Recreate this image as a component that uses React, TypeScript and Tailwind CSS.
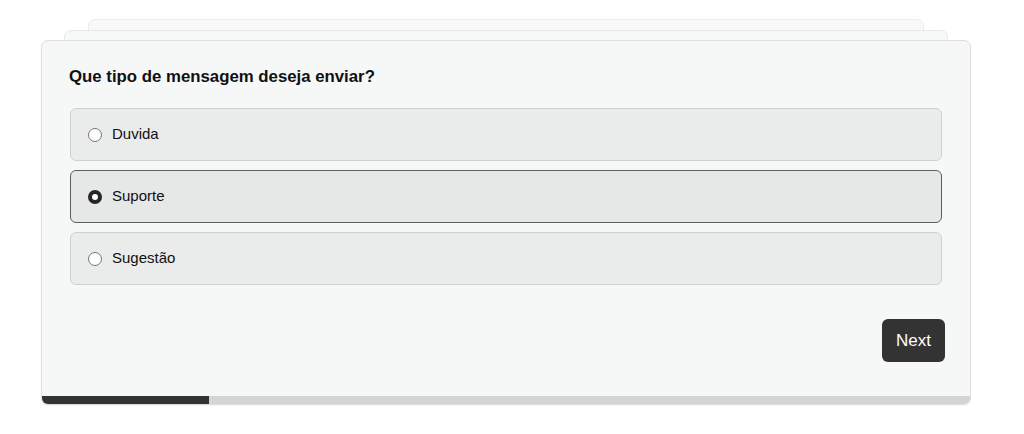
import React, { useState } from 'react';

const options = ['Duvida', 'Suporte', 'Sugestão'];

const App: React.FC = () => {
  const [selected, setSelected] = useState('Suporte');
  const progress = 18;

  return (
    <div className="min-h-[434px] w-full bg-white font-['Liberation_Sans',Arial,sans-serif] text-[#111]">
      <div className="relative ml-[41px] pt-[40px] w-[930px]">
        {/* stacked cards behind */}
        <div className="absolute left-[47px] right-[47px] top-[19px] h-[40px] rounded-[7px] border border-[#ececec] bg-[#f9f9f9]"></div>
        <div className="absolute left-[23px] right-[23px] top-[30px] h-[40px] rounded-[7px] border border-[#e8e8e8] bg-[#f7f8f8]"></div>

        <div className="relative overflow-hidden rounded-[7px] border border-[#dedede] bg-[#f6f7f7] shadow-[0_1px_2px_rgba(0,0,0,0.04)]">
          <div className="px-[28px] pt-[24px] pb-[34px]">
            <h2 className="text-[16.8px] font-bold leading-6 mb-[19px] -ml-px">Que tipo de mensagem deseja enviar?</h2>

            <div className="flex flex-col gap-[9px]">
              {options.map(opt => {
                const active = selected === opt;
                return (
                  <label
                    key={opt}
                    onClick={() => setSelected(opt)}
                    className={
                      active
                        ? 'flex h-[53px] cursor-pointer items-center gap-[10px] rounded-[6px] border border-[#5e5e5e] bg-[#e6e7e7] pl-[17px] text-[15px]'
                        : 'flex h-[53px] cursor-pointer items-center gap-[10px] rounded-[6px] border border-[#cfd0d0] bg-[#eaebeb] pl-[17px] text-[15px]'
                    }
                  >
                    <span
                      className={
                        active
                          ? 'block h-[14px] w-[14px] rounded-full border-[4px] border-[#262626] bg-white'
                          : 'block h-[14px] w-[14px] rounded-full border-[1.5px] border-[#767676] bg-white'
                      }
                    ></span>
                    <span>{opt}</span>
                  </label>
                );
              })}
            </div>

            <div className="mt-[34px] flex justify-end -mr-[3px]">
              <button className="h-[43px] rounded-[6px] bg-[#333333] px-[14px] text-[17px] text-white">
                Next
              </button>
            </div>
          </div>

          {/* progress */}
          <div className="h-[8px] w-full bg-[#d4d4d4]">
            <div className="h-full bg-[#333333]" style={{ width: `${progress}%` }}></div>
          </div>
        </div>
      </div>
    </div>
  );
};

export default App;
